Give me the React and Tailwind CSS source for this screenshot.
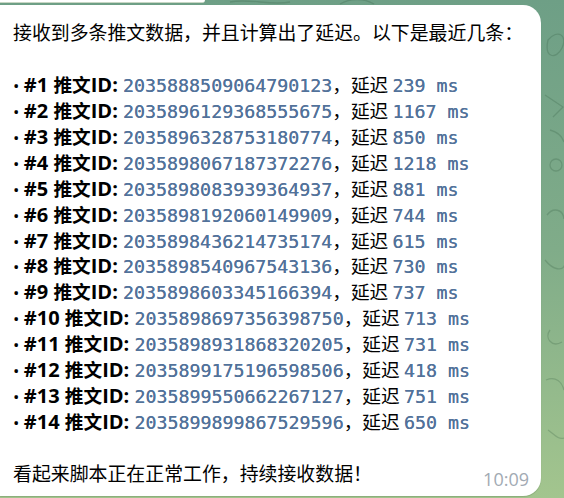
const rows = [
  ['2035888509064790123', '239'],
  ['2035896129368555675', '1167'],
  ['2035896328753180774', '850'],
  ['2035898067187372276', '1218'],
  ['2035898083939364937', '881'],
  ['2035898192060149909', '744'],
  ['2035898436214735174', '615'],
  ['2035898540967543136', '730'],
  ['2035898603345166394', '737'],
  ['2035898697356398750', '713'],
  ['2035898931868320205', '731'],
  ['2035899175196598506', '418'],
  ['2035899550662267127', '751'],
  ['2035899899867529596', '650'],
];

const mono = "font-['DejaVu_Sans_Mono',monospace] text-[18.3px] text-[#52729a] [text-shadow:0_0_0.4px_#52729a]";
const cjk = "font-['Noto_Sans_CJK_SC',sans-serif]";

// faint doodles of the chat wallpaper
const Doodles = () => (
  <svg className="absolute inset-0" width="564" height="498" fill="none" stroke="rgba(40,80,55,0.22)" strokeWidth="1.3">
    <path d="M548 40c10-12 20-4 14 8s-18 10-14-8z" />
    <path d="M545 95l18 12-10 10" />
    <path d="M550 130c8 2 12 6 14 12" />
    <circle cx="556" cy="165" r="6" />
    <path d="M547 215c6-8 16-6 17 4" />
    <path d="M545 260c8 10 18 12 20 4" />
    <path d="M550 330c-6 8 2 18 12 12" />
    <path d="M546 380c10-4 16 2 18 10" />
    <path d="M548 430c6 4 10 10 16 8" />
    <path d="M230 2c20-4 40 4 60 0" />
    <path d="M340 4c10-6 24-6 34 0" />
  </svg>
);

export default function App() {
  return (
    <div className="relative w-[564px] h-[498px] overflow-hidden bg-linear-to-b from-[#6e9f86] via-[#80ac89] to-[#a3c58e] font-['Open_Sans','Noto_Sans_CJK_SC',sans-serif] text-[18.7px] text-black">
      <Doodles />

      <div className="relative">
        {/* previous message bottom */}
        <div className="w-[205px] h-[3px] bg-white rounded-br-[10px] border-b border-[#c9d6c4]" />

        {/* message bubble */}
        <div className="mt-[2px] w-[541px] bg-white rounded-tr-[18px] rounded-br-[18px] pl-[13px] pr-[12px] pt-[14px] pb-[3px] leading-[25.94px] shadow-[0_1px_1px_rgba(0,40,0,0.15)]">
          <div className={`h-[25.94px] ${cjk} text-[18.9px]`}>
            接收到多条推文数据，并且计算出了延迟。以下是最近几条：
          </div>
          <div className="h-[25.94px]" />
          {rows.map(([id, ms], i) => (
            <div key={id} className="h-[25.94px] flex items-baseline whitespace-pre">
              <span className="text-[17px]">• </span>
              <span className="font-bold text-[20px]">#{i + 1} </span>
              <span className={`font-bold ${cjk}`}>推文</span>
              <span className="font-bold text-[20px]">ID: </span>
              <span className={mono}>{id}</span>
              <span className={cjk}>，延迟 </span>
              <span className={mono}>{ms} ms</span>
            </div>
          ))}
          <div className="h-[25.94px]" />
          <div className="flex justify-between items-start">
            <span className={`${cjk} text-[18.9px]`}>看起来脚本正在正常工作，持续接收数据！</span>
            <span className="pt-[7px] text-[18px] text-[#a2aab3]">10:09</span>
          </div>
        </div>
      </div>
    </div>
  );
}
